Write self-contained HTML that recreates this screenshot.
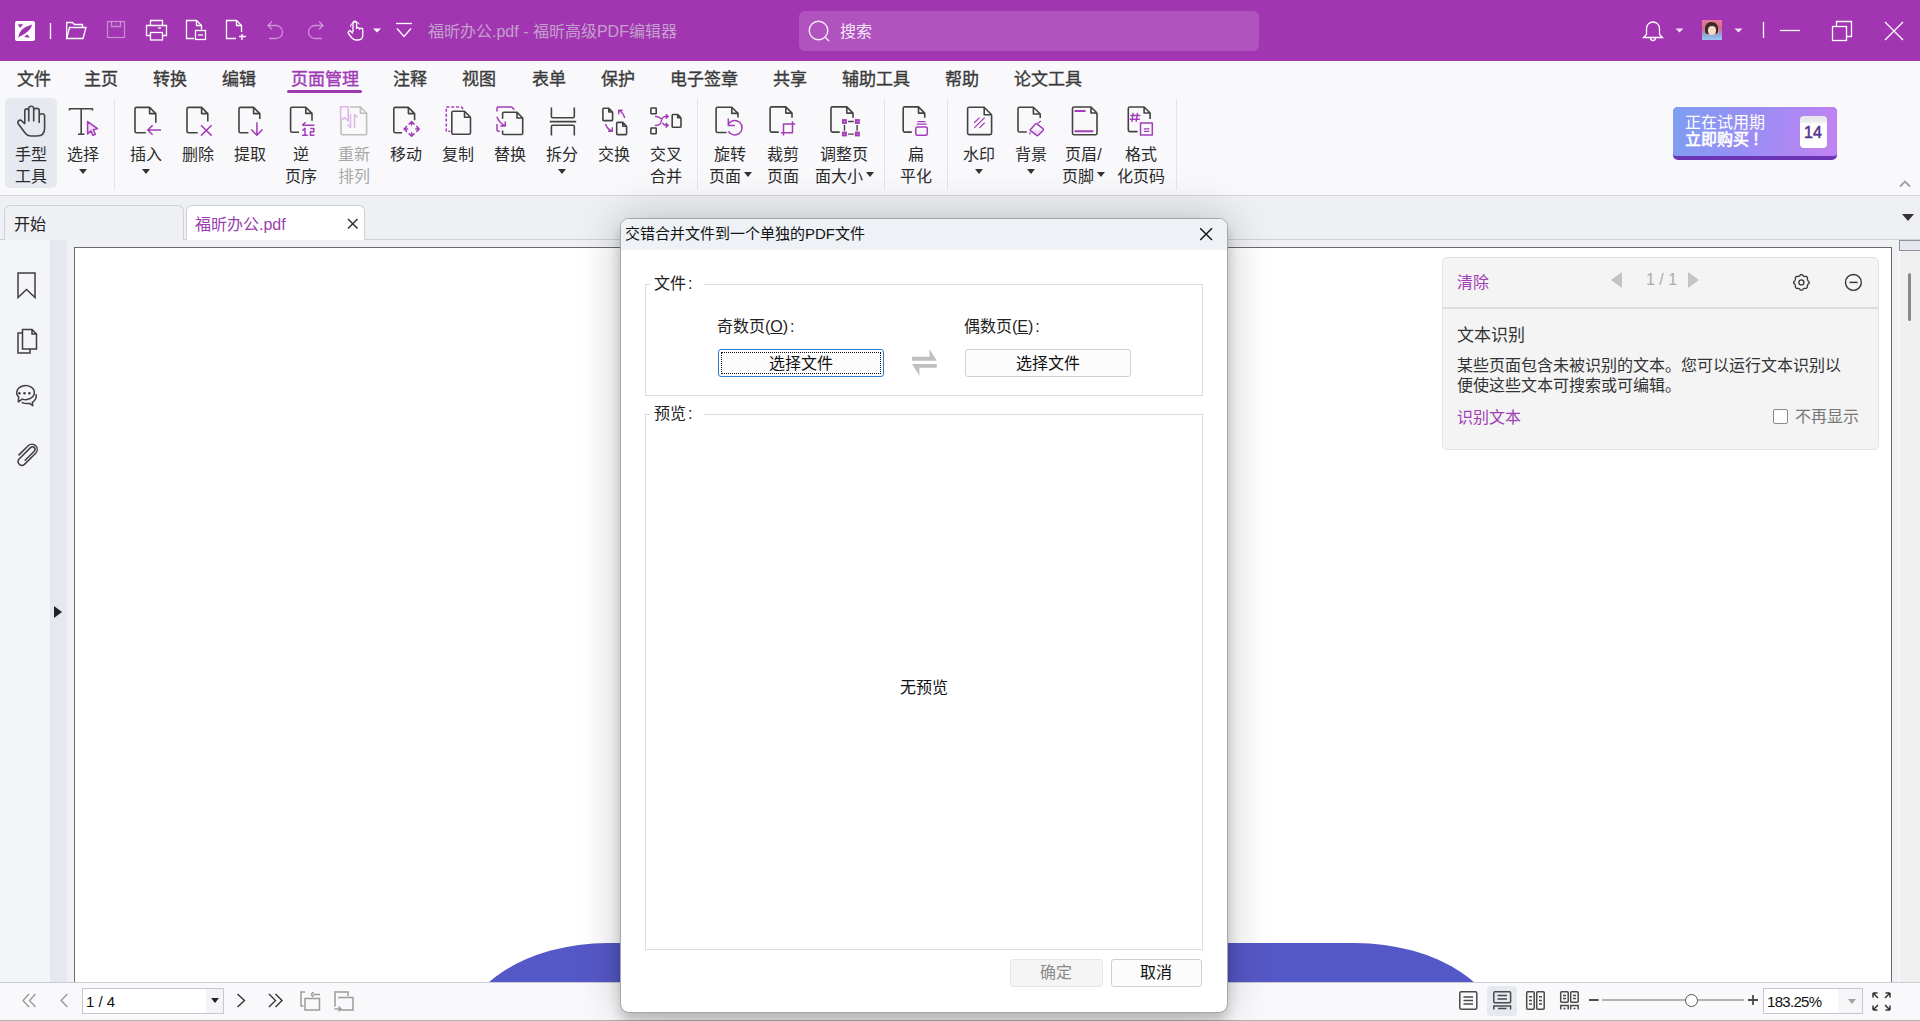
<!DOCTYPE html>
<html lang="zh-CN">
<head>
<meta charset="utf-8">
<title>福昕办公.pdf - 福昕高级PDF编辑器</title>
<style>
*{box-sizing:border-box;margin:0;padding:0}
html,body{width:1920px;height:1021px;overflow:hidden}
body{position:relative;background:#F9F9FC;font-family:"Liberation Sans",sans-serif;color:#333;font-size:16px}
.a{position:absolute}
.t{position:absolute;white-space:nowrap;line-height:1}
#titlebar{left:0;top:0;width:1920px;height:61px;background:#A236B2}
#search{left:799px;top:11px;width:460px;height:40px;border-radius:6px;background:#B053BF}
#menubar .t{top:71px;font-size:17px;color:#3A3A3A;-webkit-text-stroke:0.35px #3A3A3A}
#ribbon{left:0;top:61px;width:1920px;height:134px;background:#F9F9FC}
.rl{position:absolute;font-size:16px;line-height:22px;color:#2B2B2B;text-align:center;white-space:nowrap}
.dis{color:#A8A8A8}
.sep{position:absolute;top:99px;width:1px;height:91px;background:#E2E4EA}
.tri{position:absolute;width:0;height:0;border-left:4px solid transparent;border-right:4px solid transparent;border-top:5px solid #333}
.itri{display:inline-block;vertical-align:top;margin-top:6px;margin-left:3px;width:0;height:0;border-left:4px solid transparent;border-right:4px solid transparent;border-top:5px solid #333}
</style>
</head>
<body>
<div id="titlebar" class="a"></div>
<div id="search" class="a"></div>
<svg class="a" style="left:0;top:0" width="1920" height="61" viewBox="0 0 1920 61" fill="none" stroke="#fff" stroke-width="1.3">
 <!-- logo -->
 <rect x="15" y="21" width="20" height="20" rx="2" fill="#fff" stroke="none"/>
 <path d="M18.2 37.4 Q19.2 28.2 32 24.6 Q31 30 25.5 33.3 Q22.5 35.3 18.2 37.4 Z" fill="#A035B1" stroke="none"/>
 <path d="M17.8 24.2 H23.4 L19.9 27.9 Z M24.1 36.9 L27.3 34.2 L29.9 37.8 Z" fill="#A035B1" stroke="none"/>
 <line x1="50.5" y1="23" x2="50.5" y2="39"/>
 <!-- folder -->
 <path d="M66.7 38.5 V22.5 H72.5 L74.5 24.5 H82.5 V27.5"/>
 <path d="M66.7 38.5 L69.5 27.5 H86 L83 38.5 Z"/>
 <!-- save (dim) -->
 <g stroke="rgba(255,255,255,0.42)">
  <rect x="107.5" y="21.5" width="17" height="16"/>
  <path d="M111.5 21.5 V26.5 H120.5 V21.5"/>
  <line x1="115.5" y1="24" x2="116.5" y2="24"/>
 </g>
 <!-- printer -->
 <path d="M150.5 25.5 V20.5 H162.5 V25.5"/>
 <path d="M150.5 35.5 H146.5 V25.5 H166.5 V35.5 H162.5"/>
 <rect x="150.5" y="32.5" width="12" height="7.5"/>
 <line x1="158" y1="28" x2="161" y2="28"/>
 <!-- page w/ box -->
 <path d="M194 38.5 H186.5 V20.5 H196.5 L201.5 25.5 V29.5"/>
 <path d="M196.5 20.5 V25.5 H201.5"/>
 <rect x="195.5" y="30.5" width="10" height="9"/>
 <line x1="198" y1="35" x2="203" y2="35"/>
 <!-- new page + -->
 <path d="M236 38.5 H226.5 V20.5 H236.5 L241.5 25.5 V32"/>
 <path d="M236.5 20.5 V25.5 H241.5"/>
 <path d="M242 34 V40 M239 36.5 H246"/>
 <!-- undo / redo dim -->
 <g stroke="rgba(255,255,255,0.45)">
  <path d="M268.5 25.5 H276 A6.5 6.5 0 0 1 276 38.5 H269"/>
  <path d="M272 21.5 L268 25.5 L272 29.5"/>
  <path d="M322.5 25.5 H315 A6.5 6.5 0 0 0 315 38.5 H322"/>
  <path d="M319 21.5 L323 25.5 L319 29.5"/>
 </g>
 <!-- touch hand -->
 <path d="M353 32 V23 A1.8 1.8 0 0 1 356.6 23 V29 M356.6 28.5 A1.6 1.6 0 0 1 359.6 28.8 V30 M359.6 29.5 A1.6 1.6 0 0 1 362.8 30 V35 Q362.8 40 358 40 H356 Q353.5 40 351.5 37.5 L348.5 33.5 A1.5 1.5 0 0 1 351 31.5 L353 33.5"/>
 <path d="M350.5 27 A5 5 0 0 1 359.5 24" stroke-width="1"/>
 <path d="M373 28.5 H381 L377 32.5 Z" fill="#fff" stroke="none"/>
 <!-- quick access chevron -->
 <line x1="396" y1="23.5" x2="412" y2="23.5"/>
 <path d="M397 28.5 L404 36.5 L411 28.5"/>
 <!-- right side -->
 <path d="M1653 22 A6.5 6.5 0 0 1 1659.5 28.5 V34.5 L1662.5 37.5 H1643.5 L1646.5 34.5 V28.5 A6.5 6.5 0 0 1 1653 22 Z"/>
 <path d="M1650.5 38 A2.5 2.5 0 0 0 1655.5 38"/>
 <path d="M1675.5 28.5 H1683.5 L1679.5 32.5 Z" fill="#fff" stroke="none" opacity="0.85"/>
 <path d="M1734.5 28.5 H1742.5 L1738.5 32.5 Z" fill="#fff" stroke="none" opacity="0.85"/>
 <line x1="1763.5" y1="22" x2="1763.5" y2="38"/>
 <line x1="1780" y1="30.5" x2="1800" y2="30.5"/>
 <rect x="1832.5" y="26.5" width="14" height="14"/>
 <path d="M1836.5 26.5 V21.5 H1851.5 V36.5 H1846.5"/>
 <path d="M1885 22 L1903 40 M1903 22 L1885 40"/>
</svg>
<!-- avatar -->
<div class="a" style="left:1702px;top:20px;width:20px;height:20px;background:linear-gradient(180deg,#e87a9a 0%,#d86888 40%,#8bb8e8 85%,#a0c8f0 100%);overflow:hidden">
 <div class="a" style="left:3px;top:2px;width:13px;height:12px;border-radius:6px 6px 3px 3px;background:#3a2a2a"></div>
 <div class="a" style="left:6px;top:6px;width:8px;height:9px;border-radius:4px;background:#f4d8c8"></div>
</div>
<div class="t" style="left:428px;top:24px;font-size:16px;color:#C3A0CB">福昕办公.pdf - 福昕高级PDF编辑器</div>
<div class="t" style="left:840px;top:24px;font-size:16px;color:#F4E6F6">搜索</div>
<svg class="a" style="left:0;top:0" width="1920" height="61" fill="none" stroke="#F6E8F8" stroke-width="1.4">
 <circle cx="818.5" cy="30.5" r="9.3"/>
 <line x1="825" y1="37" x2="829" y2="41"/>
</svg>
<svg class="a" style="left:0;top:0" width="1200" height="196" viewBox="0 0 1200 196" fill="none" stroke-linecap="butt" stroke-linejoin="round"><defs><linearGradient id="bgf" x1="0" y1="0" x2="0" y2="1"><stop offset="0.5" stop-color="#fff" stop-opacity="0"/><stop offset="0.5" stop-color="#F0DDF4"/></linearGradient></defs>
<rect x="5" y="98" width="52" height="90" rx="5" fill="#E6E9F0" stroke="none"/>
<g stroke="#434343" stroke-width="1.6">
<path d="M24.8 124 V111 Q24.8 108.9 26.8 108.9 Q28.75 108.9 28.75 111 V121.6 M28.75 111 V108.4 Q28.75 106.3 31.2 106.3 Q33.7 106.3 33.7 108.4 V121.6 M33.7 110.5 Q33.7 108.4 36.45 108.4 Q39.2 108.4 39.2 110.6 V122.9 M39.2 116 Q39.2 113.8 41.9 113.8 Q44.6 113.8 44.6 116 V128.5 Q44.6 136 37 136 H30.5 Q27.3 136 25.3 133.3 L18.4 124 Q17.1 122 18.7 120.6 Q20.4 119.4 22.2 121.2 L24.8 124"/>
<path d="M69.5 110.5 V108.8 H92.5 V110.5 M81.2 108.8 V134.3 M78 134.3 H84.5"/>
<path d="M155.8 122.7 V113.60000000000001 L149.60000000000002 107.4 H136.5 Q135 107.4 135 108.9 V131.3 Q135 132.8 136.5 132.8 H145.7 M149.60000000000002 107.4 V113.60000000000001 H155.8"/>
<path d="M207.8 121.5 V113.60000000000001 L201.60000000000002 107.4 H188.5 Q187 107.4 187 108.9 V131.3 Q187 132.8 188.5 132.8 H197.7 M201.60000000000002 107.4 V113.60000000000001 H207.8"/>
<path d="M259.8 119 V113.60000000000001 L253.60000000000002 107.4 H240.5 Q239 107.4 239 108.9 V131.3 Q239 132.8 240.5 132.8 H248.4 M253.60000000000002 107.4 V113.60000000000001 H259.8"/>
<path d="M312 120.7 V113.4 L305.8 107.2 H292.1 Q290.6 107.2 290.6 108.7 V130.7 Q290.6 132.2 292.1 132.2 H299 M305.8 107.2 V113.4 H312"/>
<path d="M414.6 120.3 V113.60000000000001 L408.40000000000003 107.4 H395.3 Q393.8 107.4 393.8 108.9 V131.3 Q393.8 132.8 395.3 132.8 H402 M408.40000000000003 107.4 V113.60000000000001 H414.6"/>
<path d="M470.5 117.2 V132.8 Q470.5 134.3 469.0 134.3 H453.3 Q451.8 134.3 451.8 132.8 V112.7 Q451.8 111.2 453.3 111.2 H464.5 L470.5 117.2 M464.5 111.2 V117.2 H470.5"/>
<path d="M502.6 118.7 V113.6 Q502.6 112.3 503.9 112.3 H517 L522.7 118 V133.2 Q522.7 134.5 521.4 134.5 H503.9 Q502.6 134.5 502.6 133.2 V130.4 M517 112.3 V118 H522.7"/>
<path d="M551.4 107.4 V116.5 Q551.4 117.8 552.7 117.8 H573 Q574.3 117.8 574.3 116.5 V107.4 M549.7 121.6 H576.2 M551.4 135.5 V126.5 Q551.4 125.2 552.7 125.2 H573 Q574.3 125.2 574.3 126.5 V135.5"/>
<path d="M612.6 112.0 V119.8 Q612.6 120.6 611.8000000000001 120.6 H603.6999999999999 Q602.9 120.6 602.9 119.8 V109.0 Q602.9 108.2 603.6999999999999 108.2 H608.8000000000001 L612.6 112.0 M608.8000000000001 108.2 V112.0 H612.6"/>
<path d="M626.6 126.2 V133.79999999999998 Q626.6 134.6 625.8000000000001 134.6 H617.5 Q616.7 134.6 616.7 133.79999999999998 V123.2 Q616.7 122.4 617.5 122.4 H622.8000000000001 L626.6 126.2 M622.8000000000001 122.4 V126.2 H626.6"/>
<rect x="650.9" y="108" width="5.3" height="5.8" rx="0.5"/><rect x="650.9" y="128" width="5.3" height="5.8" rx="0.5"/>
<path d="M681 117.8 V126.5 Q681 127.3 680.2 127.3 H673.0 Q672.2 127.3 672.2 126.5 V115.3 Q672.2 114.5 673.0 114.5 H677.7 L681 117.8 M677.7 114.5 V117.8 H681"/>
<path d="M738 117.5 V113.4 L731.8 107.2 H717.6 Q716.1 107.2 716.1 108.7 V131.0 Q716.1 132.5 717.6 132.5 H726.5 M731.8 107.2 V113.4 H738"/>
<path d="M792 117.8 V113.10000000000001 L785.8 106.9 H771.6 Q770.1 106.9 770.1 108.4 V130.6 Q770.1 132.1 771.6 132.1 H778.7 M785.8 106.9 V113.10000000000001 H792"/>
<path d="M853 117.8 V113.10000000000001 L846.8 106.9 H832.5 Q831 106.9 831 108.4 V130.6 Q831 132.1 832.5 132.1 H839.7 M846.8 106.9 V113.10000000000001 H853"/>
<path d="M848.1 121.5 H853.8 M848.1 134.1 H853.8 M844.5 125 V130.7 M857.1 125 V130.7" stroke-width="1.4"/>
<path d="M924.7 117.8 V113.10000000000001 L918.5 106.9 H904.7 Q903.2 106.9 903.2 108.4 V130.6 Q903.2 132.1 904.7 132.1 H911.8 M918.5 106.9 V113.10000000000001 H924.7"/>
<path d="M991.6 114.7 V133.1 Q991.6 134.6 990.1 134.6 H969.1 Q967.6 134.6 967.6 133.1 V108.8 Q967.6 107.3 969.1 107.3 H984.2 L991.6 114.7 M984.2 107.3 V114.7 H991.6"/>
<path d="M1040.2 118 V114.0 L1033.4 107.2 H1019.5 Q1018 107.2 1018 108.7 V130.5 Q1018 132 1019.5 132 H1026.8 M1033.4 107.2 V114.0 H1040.2"/>
<path d="M1097 113 V133.3 Q1097 134.8 1095.5 134.8 H1074.0 Q1072.5 134.8 1072.5 133.3 V108.5 Q1072.5 107 1074.0 107 H1091 L1097 113 M1091 107 V113 H1097"/>
<path d="M1150.1 119 V113 L1144.1 107 H1129.8 Q1128.3 107 1128.3 108.5 V130.1 Q1128.3 131.6 1129.8 131.6 H1137.6 M1144.1 107 V113 H1150.1"/>
</g>
<g stroke="#BDBDBD" stroke-width="1.6">
<path d="M341 121 V133.5 Q341 134.8 342.3 134.8 H365.3 Q366.6 134.8 366.6 133.5 V113.2 L360.4 107 H350"/>
<path d="M360.4 107 V113.2 H366.6" />
</g>
<g stroke="#DDB8E6" stroke-width="1.6"><path d="M340.6 106.8 V120.8 L344.4 117.6 L348.2 120.8 V106.8 Z"/><path d="M350.5 114 V127.5 L347.5 124.5 M354.5 128 V114.5 L357.5 117.5"/></g>
<g stroke="#A23CB8" stroke-width="1.5">
<path d="M87.6 121.6 L97.6 128.6 L93.3 129.8 L95.3 134.2 L93 135.3 L90.8 130.9 L87.6 134 Z" fill="#F0DDF4"/>
<path d="M148 130 H161 M152.6 125.4 L147.8 130 L152.6 134.8"/>
<path d="M201 125.3 L211.6 135.6 M211.6 125.3 L201 135.6"/>
<path d="M256.9 122.3 V135 M251.3 129.5 L256.9 135.3 L262.5 129.5"/>
<path d="M302.3 125.2 H314.4 M305.6 122.2 L302.3 125.2"/>
<path d="M302.4 130.6 L305 128.2 V135.5 M302 135.2 H307.8 M310.2 128.4 H313.8 V131.7 H310.4 V135.2 H314.4"/>
<path d="M411.6 121.8 V125.5 M408.7 124.5 L411.6 121.6 L414.5 124.5 M411.6 136.2 V132.3 M408.7 133.4 L411.6 136.3 L414.5 133.4 M404.2 129 H408.2 M407 126.1 L404.1 129 L407 131.9 M419.2 129 H415.2 M416.3 126.1 L419.2 129 L416.3 131.9"/>
<path d="M450.3 131.3 H446.3 V106.9 H461.1 L464 109.8" stroke-dasharray="3 1.9" stroke-dashoffset="1"/>
<path d="M499.7 131.2 H498.2 Q497 131.2 497 130 V124 M497 111.4 V108.2 Q497 107 498.2 107 H511.6 L514.4 109.6"/>
<path d="M496.9 116.7 Q499 122.5 505 126 M505.3 121.5 V126 H500.3"/>
<path d="M624.7 118 Q623.5 113 618.9 110.4 M618.7 114.3 V110.2 H622.7" stroke-width="1.4"/>
<path d="M605.5 124 Q607 129 612.1 131.2 M612.3 127.3 V131.3 H608" stroke-width="1.4"/>
<path d="M655 116.5 Q659 116.3 661.2 118.8 M655 125.4 Q660.8 125.8 661.3 121 Q662 116.4 666.5 116.4 M662.3 123 Q664 125.3 666.5 125.3" stroke-width="1.4"/><path d="M666 114 L668.8 116.4 L666 118.8 Z M666 122.9 L668.8 125.3 L666 127.7 Z" fill="#A23CB8" stroke-width="0.8"/>
<path d="M728.6 123.8 A7.3 7.3 0 1 1 728.4 131.3"/><path d="M728.3 118.6 V125.4 H734.8"/>
<path d="M783.5 135.6 V124.1 H795.2 M780.9 132.7 H792.5 V121.2"/>
</g>
<g fill="#A23CB8" stroke="none"><rect x="842" y="119.1" width="4.9" height="4.8"/><rect x="854.9" y="119.1" width="4.9" height="4.8"/><rect x="842" y="131.6" width="4.9" height="4.8"/><rect x="854.9" y="131.6" width="4.9" height="4.8"/></g><g fill="#E8B8F0"><rect x="844" y="121" width="1" height="1"/><rect x="856.9" y="121" width="1" height="1"/><rect x="844" y="133.5" width="1" height="1"/><rect x="856.9" y="133.5" width="1" height="1"/></g>
<g stroke="#A23CB8" stroke-width="1.5">
<rect x="915.8" y="126.9" width="11.5" height="8.3" rx="1.5"/><path d="M917.5 121.7 H925.6 M916.6 124.2 H926.8" stroke-width="1.2"/>
<path d="M974.3 122.8 L979.5 117.6 M974.3 127.9 L984.6 117.6 M979.5 127.9 L984.6 122.8" stroke-width="1.25"/>
<path d="M1030.5 129.6 L1035.2 124.3 Q1036.2 123.2 1037.2 124.1 L1042.9 128.6 Q1043.9 129.4 1043 130.4 L1038.5 135.1 Q1037.5 136.1 1036.5 135.2 L1030.7 130.9 Q1029.8 130.2 1030.5 129.6 Z" fill="url(#bgf)"/><path d="M1037.6 123.4 L1040.8 121" stroke-width="1.3"/><circle cx="1029.9" cy="133.3" r="0.9" fill="#A23CB8" stroke="none"/>
<path d="M1074.5 111 H1085.5 M1074.5 131.2 H1093.3" stroke-width="2"/>
<path d="M1133.2 112.8 L1131.8 121.8 M1137.5 112.8 L1136.1 121.8 M1130.3 115.5 H1140.4 M1129.8 119.2 H1139.8" stroke-width="1.4"/>
<rect x="1140.5" y="123.1" width="11.8" height="11.8" fill="#F9F9FC"/><path d="M1144 128.8 H1149.3 M1144 131.3 H1149.3" stroke-width="1.2"/>
</g>
</svg>
<div id="menubar">
<div class="t" style="left:17px">文件</div>
<div class="t" style="left:84px">主页</div>
<div class="t" style="left:153px">转换</div>
<div class="t" style="left:222px">编辑</div>
<div class="t" style="left:291px;color:#A038B4;-webkit-text-stroke-color:#A038B4">页面管理</div>
<div class="t" style="left:393px">注释</div>
<div class="t" style="left:462px">视图</div>
<div class="t" style="left:532px">表单</div>
<div class="t" style="left:601px">保护</div>
<div class="t" style="left:670px">电子签章</div>
<div class="t" style="left:773px">共享</div>
<div class="t" style="left:842px">辅助工具</div>
<div class="t" style="left:945px">帮助</div>
<div class="t" style="left:1014px">论文工具</div>
</div>
<div class="a" style="left:287px;top:90px;width:75px;height:3px;border-radius:2px;background:#A038B4"></div>
<div class="rl" style="left:-19px;top:144px;width:100px">手型<br>工具</div>
<div class="rl" style="left:33px;top:144px;width:100px">选择</div>
<div class="tri" style="left:79px;top:169px"></div>
<div class="rl" style="left:96px;top:144px;width:100px">插入</div>
<div class="tri" style="left:142px;top:169px"></div>
<div class="rl" style="left:147.5px;top:144px;width:100px">删除</div>
<div class="rl" style="left:199.5px;top:144px;width:100px">提取</div>
<div class="rl" style="left:251px;top:144px;width:100px">逆<br>页序</div>
<div class="rl dis" style="left:303.5px;top:144px;width:100px">重新<br>排列</div>
<div class="rl" style="left:356px;top:144px;width:100px">移动</div>
<div class="rl" style="left:407.7px;top:144px;width:100px">复制</div>
<div class="rl" style="left:460px;top:144px;width:100px">替换</div>
<div class="rl" style="left:512px;top:144px;width:100px">拆分</div>
<div class="tri" style="left:558px;top:169px"></div>
<div class="rl" style="left:564px;top:144px;width:100px">交换</div>
<div class="rl" style="left:616px;top:144px;width:100px">交叉<br>合并</div>
<div class="rl" style="left:680px;top:144px;width:100px">旋转<br>页面<span class="itri"></span></div>
<div class="rl" style="left:732.5px;top:144px;width:100px">裁剪<br>页面</div>
<div class="rl" style="left:794px;top:144px;width:100px">调整页<br>面大小<span class="itri"></span></div>
<div class="rl" style="left:866px;top:144px;width:100px">扁<br>平化</div>
<div class="rl" style="left:928.5px;top:144px;width:100px">水印</div>
<div class="tri" style="left:974.5px;top:169px"></div>
<div class="rl" style="left:981px;top:144px;width:100px">背景</div>
<div class="tri" style="left:1027px;top:169px"></div>
<div class="rl" style="left:1033.5px;top:144px;width:100px">页眉/<br>页脚<span class="itri"></span></div>
<div class="rl" style="left:1091px;top:144px;width:100px">格式<br>化页码</div>
<div class="sep" style="left:114px"></div>
<div class="sep" style="left:697px"></div>
<div class="sep" style="left:884px"></div>
<div class="sep" style="left:947px"></div>
<div class="sep" style="left:1176px"></div>
<!-- ribbon bottom line & tab bar -->
<div class="a" style="left:0;top:195px;width:1920px;height:1px;background:#D3D6DD"></div>
<div class="a" style="left:0;top:196px;width:1920px;height:44px;background:#EEF0F4"></div>
<div class="a" style="left:0;top:239px;width:1920px;height:1px;background:#CDD1D9"></div>
<div class="a" style="left:4px;top:205px;width:180px;height:35px;background:#EEF0F4;border:1px solid #CDD1D9;border-bottom:none;border-radius:6px 6px 0 0"></div>
<div class="t" style="left:14px;top:217px;font-size:16px;color:#222">开始</div>
<div class="a" style="left:186px;top:205px;width:179px;height:35px;background:#fff;border:1px solid #CDD1D9;border-bottom:none;border-radius:6px 6px 0 0"></div>
<div class="t" style="left:195px;top:217px;font-size:16px;color:#9A3DB0">福昕办公.pdf</div>
<svg class="a" style="left:340px;top:212px" width="24" height="24" fill="none" stroke="#333" stroke-width="1.5"><path d="M8 7 L17.5 16.5 M17.5 7 L8 16.5"/></svg>
<!-- tab bar dropdown + ribbon collapse -->
<div class="a" style="left:1902px;top:214px;width:0;height:0;border-left:6px solid transparent;border-right:6px solid transparent;border-top:7px solid #333"></div>
<svg class="a" style="left:1896px;top:176px" width="18" height="14" fill="none" stroke="#A0A0A0" stroke-width="1.8"><path d="M4 10.5 L9 5.5 L14 10.5"/></svg>
<!-- left panel -->
<div class="a" style="left:0;top:240px;width:50px;height:742px;background:#F4F5F9"></div>
<div class="a" style="left:50px;top:240px;width:17px;height:742px;background:#E6E8F1"></div>
<div class="a" style="left:67px;top:240px;width:1833px;height:742px;background:#F0F1F5"></div>
<svg class="a" style="left:0;top:240px" width="50" height="240" fill="none" stroke="#3E3E3E" stroke-width="1.5">
 <path d="M18 33 V57.5 L26.5 49.5 L35 57.5 V33 Z"/>
 <path d="M22.5 93 H18 V113 H30 V109"/>
 <path d="M22.5 109 V89.5 H32 L36.5 94 V109 Z M32 89.5 V94 H36.5"/>
 <path d="M18.7 157 A8.8 7 0 1 1 22.3 159.1 L18.3 161.9 Z" stroke-linejoin="round"/>
 <path d="M36.1 154.1 Q36.9 159.5 32.3 162.5 L32.8 165.7 L29.4 163.4 Q25 164 21.7 162.3" stroke-linejoin="round"/>
 <circle cx="19.4" cy="153.2" r="1.25" fill="#3E3E3E" stroke="none"/><circle cx="24.5" cy="153.2" r="1.25" fill="#3E3E3E" stroke="none"/><circle cx="29.4" cy="153.2" r="1.25" fill="#3E3E3E" stroke="none"/>
 <path d="M18.53 215.4 L28.43 205.5 A5.3 5.3 0 0 1 35.92 212.97 L24.47 224.4 A3.8 3.8 0 0 1 19.09 219.06 L30.55 207.6 A2.6 2.6 0 0 1 34.22 211.3 L24.68 220.8"/>
</svg>
<div class="a" style="left:54px;top:606px;width:0;height:0;border-top:6.5px solid transparent;border-bottom:6.5px solid transparent;border-left:8px solid #222"></div>
<!-- page area -->
<div class="a" style="left:74px;top:247px;width:1818px;height:736px;background:#fff;border:1px solid #6A6A6A;border-bottom:none"></div>
<div class="a" style="left:1899px;top:240px;width:21px;height:742px;background:#EFEFF0;border-left:1px solid #FAFAFA"></div>
<div class="a" style="left:1899px;top:240px;width:22px;height:11px;background:#E6E8F0;border:1.5px solid #8E929C"></div>
<div class="a" style="left:1908px;top:273px;width:3px;height:48px;border-radius:2px;background:#8A8A8A"></div>
<!-- blue shape at page bottom -->
<div class="a" style="left:75px;top:900px;width:1816px;height:82px;overflow:hidden">
 <div class="a" style="left:383px;top:43px;width:1047px;height:260px;border-radius:150px/100px;background:#5558C7"></div>
</div>
<!-- status bar -->
<div class="a" style="left:0;top:982px;width:1920px;height:39px;background:#F9F9FC;border-top:1px solid #C9CCD4"></div>
<div class="a" style="left:0;top:1020px;width:1920px;height:1px;background:#B2B2B2"></div>
<svg class="a" style="left:0;top:982px" width="380" height="39" fill="none" stroke-width="1.4">
 <path d="M29 12 L23 18.5 L29 25 M35.5 12 L29.5 18.5 L35.5 25" stroke="#9A9A9A"/>
 <path d="M67.5 12 L61 18.5 L67.5 25" stroke="#9A9A9A"/>
 <path d="M237.5 12 L244.5 18.5 L237.5 25" stroke="#333"/>
 <path d="M269 12 L275.5 18.5 L269 25 M275.5 12 L282 18.5 L275.5 25" stroke="#333"/>
 <g stroke="#9C9C9C" stroke-width="1.5">
  <path d="M305 10 H301 V24 H303.5"/>
  <rect x="305" y="16.5" width="14.5" height="11.5"/>
  <path d="M313 12.5 H320 M311 12.5 L313.5 10 M311 12.5 L313.5 15" />
  <path d="M335 24.5 V10 H348 V14"/>
  <path d="M339 16.5 V15.5 H353 V28 H341"/>
  <path d="M334.5 27 H341 M338.5 24.5 L341 27 L338.5 29.5"/>
 </g>
</svg>
<div class="a" style="left:82px;top:988px;width:142px;height:26px;background:#fff;border:1px solid #C3C7CF"></div>
<div class="a" style="left:206px;top:989px;width:17px;height:24px;background:#F4F4F6"></div>
<div class="t" style="left:86px;top:994px;font-size:15px;color:#111">1 / 4</div>
<div class="a" style="left:211px;top:998px;width:0;height:0;border-left:4.5px solid transparent;border-right:4.5px solid transparent;border-top:5px solid #222"></div>
<div class="a" style="left:1487px;top:986px;width:30px;height:30px;border-radius:4px;background:#E6E9F0"></div>
<svg class="a" style="left:1440px;top:982px" width="480" height="39" fill="none" stroke="#4A4A4A" stroke-width="1.5">
 <rect x="19.8" y="9.8" width="17" height="17.5" rx="1.5"/>
 <path d="M23.5 15 H33 M23.5 18.5 H33 M23.5 22 H33"/>
 <rect x="53.8" y="9.8" width="16.8" height="11" rx="1"/>
 <path d="M57.5 13.5 H67 M57.5 17 H67"/>
 <path d="M53.8 27.5 V24 H70.6 V27.5 M58 26.5 H66.5"/>
 <rect x="86.7" y="9.8" width="7.5" height="17.5" rx="1"/>
 <rect x="96.7" y="9.8" width="7.5" height="17.5" rx="1"/>
 <path d="M89 14.8 H92 M89 18.5 H92 M89 22 H92 M99 14.8 H102 M99 18.5 H102 M99 22 H102"/>
 <rect x="120.7" y="9.8" width="7.5" height="10.5" rx="1"/>
 <rect x="130.7" y="9.8" width="7.5" height="10.5" rx="1"/>
 <path d="M123 13.5 H126 M123 16.5 H126 M133 13.5 H136 M133 16.5 H136"/>
 <path d="M120.7 27.5 V23.5 H128.2 V27.5 M130.7 27.5 V23.5 H138.2 V27.5 M123.5 26.5 H125.5 M133.5 26.5 H135.5"/>
 <path d="M149 18 H158.5" stroke-width="2"/>
 <path d="M162 18 H304" stroke="#B4B4B4" stroke-width="2"/>
 <path d="M308 18 H318 M313 13 V23" stroke-width="1.8"/>
</svg>
<div class="a" style="left:1684.5px;top:993.5px;width:13px;height:13px;border-radius:50%;background:#fff;border:1.3px solid #555"></div>
<div class="a" style="left:1763px;top:988px;width:100px;height:26px;background:#fff;border:1px solid #C3C7CF"></div>
<div class="a" style="left:1838px;top:989px;width:24px;height:24px;background:#F6F6F8"></div>
<div class="t" style="left:1767px;top:994px;font-size:15px;letter-spacing:-0.7px;color:#111">183.25%</div>
<div class="a" style="left:1848px;top:999px;width:0;height:0;border-left:4px solid transparent;border-right:4px solid transparent;border-top:5px solid #A0A0A0"></div>
<svg class="a" style="left:1870px;top:990px" width="24" height="24" fill="none" stroke="#333" stroke-width="1.5">
 <path d="M3 3 L8 8 M3 3 V7.5 M3 3 H7.5"/>
 <path d="M20 3 L15 8 M20 3 V7.5 M20 3 H15.5"/>
 <path d="M3 20 L8 15 M3 20 V15.5 M3 20 H7.5"/>
 <path d="M20 20 L15 15 M20 20 V15.5 M20 20 H15.5"/>
</svg>
<!-- OCR card -->
<div class="a" style="left:1442px;top:257px;width:437px;height:193px;background:#F4F4F4;border:1px solid #E2E2E2;border-radius:5px"></div>
<div class="a" style="left:1443px;top:307px;width:435px;height:1.5px;background:#DCDCDC"></div>
<div class="t" style="left:1457px;top:275px;font-size:16px;color:#A03CB4">清除</div>
<div class="a" style="left:1611px;top:272px;width:0;height:0;border-top:8px solid transparent;border-bottom:8px solid transparent;border-right:11px solid #C4C4C4"></div>
<div class="t" style="left:1646px;top:272px;font-size:16px;color:#ABABAB">1 / 1</div>
<div class="a" style="left:1688px;top:272px;width:0;height:0;border-top:8px solid transparent;border-bottom:8px solid transparent;border-left:11px solid #C4C4C4"></div>
<svg class="a" style="left:1790px;top:272px" width="74" height="22" fill="none" stroke="#333" stroke-width="1.5">
 <path d="M17.59 12.96 L17.49 13.21 L17.38 13.45 L17.28 13.70 L17.26 13.99 L17.39 14.40 L17.49 14.83 L17.41 15.14 L17.25 15.39 L17.05 15.63 L16.84 15.84 L16.63 16.05 L16.39 16.25 L16.14 16.41 L15.83 16.49 L15.40 16.39 L14.99 16.26 L14.70 16.28 L14.45 16.38 L14.21 16.49 L13.96 16.59 L13.72 16.69 L13.47 16.78 L13.23 16.89 L13.00 17.08 L12.80 17.46 L12.58 17.84 L12.30 18.00 L12.00 18.07 L11.70 18.09 L11.40 18.10 L11.10 18.09 L10.80 18.07 L10.50 18.00 L10.22 17.84 L10.00 17.46 L9.80 17.08 L9.57 16.89 L9.33 16.78 L9.08 16.69 L8.84 16.59 L8.59 16.49 L8.35 16.38 L8.10 16.28 L7.81 16.26 L7.40 16.39 L6.97 16.49 L6.66 16.41 L6.41 16.25 L6.17 16.05 L5.96 15.84 L5.75 15.63 L5.55 15.39 L5.39 15.14 L5.31 14.83 L5.41 14.40 L5.54 13.99 L5.52 13.70 L5.42 13.45 L5.31 13.21 L5.21 12.96 L5.11 12.72 L5.02 12.47 L4.91 12.23 L4.72 12.00 L4.34 11.80 L3.96 11.58 L3.80 11.30 L3.73 11.00 L3.71 10.70 L3.70 10.40 L3.71 10.10 L3.73 9.80 L3.80 9.50 L3.96 9.22 L4.34 9.00 L4.72 8.80 L4.91 8.57 L5.02 8.33 L5.11 8.08 L5.21 7.84 L5.31 7.59 L5.42 7.35 L5.52 7.10 L5.54 6.81 L5.41 6.40 L5.31 5.97 L5.39 5.66 L5.55 5.41 L5.75 5.17 L5.96 4.96 L6.17 4.75 L6.41 4.55 L6.66 4.39 L6.97 4.31 L7.40 4.41 L7.81 4.54 L8.10 4.52 L8.35 4.42 L8.59 4.31 L8.84 4.21 L9.08 4.11 L9.33 4.02 L9.57 3.91 L9.80 3.72 L10.00 3.34 L10.22 2.96 L10.50 2.80 L10.80 2.73 L11.10 2.71 L11.40 2.70 L11.70 2.71 L12.00 2.73 L12.30 2.80 L12.58 2.96 L12.80 3.34 L13.00 3.72 L13.23 3.91 L13.47 4.02 L13.72 4.11 L13.96 4.21 L14.21 4.31 L14.45 4.42 L14.70 4.52 L14.99 4.54 L15.40 4.41 L15.83 4.31 L16.14 4.39 L16.39 4.55 L16.63 4.75 L16.84 4.96 L17.05 5.17 L17.25 5.41 L17.41 5.66 L17.49 5.97 L17.39 6.40 L17.26 6.81 L17.28 7.10 L17.38 7.35 L17.49 7.59 L17.59 7.84 L17.69 8.08 L17.78 8.33 L17.89 8.57 L18.08 8.80 L18.46 9.00 L18.84 9.22 L19.00 9.50 L19.07 9.80 L19.09 10.10 L19.10 10.40 L19.09 10.70 L19.07 11.00 L19.00 11.30 L18.84 11.58 L18.46 11.80 L18.08 12.00 L17.89 12.23 L17.78 12.47 L17.69 12.72 L17.59 12.96 Z" stroke-width="1.3" stroke-linejoin="round"/>
 <circle cx="11.4" cy="10.4" r="2.5" stroke-width="1.3"/>
 <circle cx="63.4" cy="10.4" r="7.9" stroke-width="1.35"/>
 <path d="M59.4 10.4 H67.6" stroke-width="1.4"/>
</svg>
<div class="t" style="left:1457px;top:327px;font-size:17px;color:#333">文本识别</div>
<div class="a" style="left:1457px;top:356px;width:410px;font-size:16px;line-height:20px;color:#333">某些页面包含未被识别的文本。您可以运行文本识别以<br>便使这些文本可搜索或可编辑。</div>
<div class="t" style="left:1457px;top:410px;font-size:16px;color:#A03CB4">识别文本</div>
<div class="a" style="left:1773px;top:409px;width:15px;height:15px;background:#fff;border:1px solid #8A8A8A;border-radius:2px"></div>
<div class="t" style="left:1795px;top:409px;font-size:16px;color:#777">不再显示</div>
<!-- trial button -->
<div class="a" style="left:1673px;top:107px;width:164px;height:53px;border-radius:5px;background:#6A34B4"></div>
<div class="a" style="left:1673px;top:107px;width:164px;height:49px;border-radius:5px 5px 3px 3px;background:linear-gradient(100deg,#7E9EF2 0%,#9B8DF4 50%,#C282F2 100%)"></div>
<div class="a" style="left:1685px;top:114px;font-size:16px;line-height:17px;color:#fff;white-space:nowrap">正在试用期<br><span style="-webkit-text-stroke:0.6px #fff">立即购买<span style="margin-left:3px">！</span></span></div>
<div class="a" style="left:1800px;top:116px;width:27px;height:32px;border-radius:4px;background:linear-gradient(180deg,#E6E6E8 0px,#EDEDEF 6px,#FFFFFF 8px)"></div>
<div class="t" style="left:1804px;top:125px;font-size:16px;color:#5A2E8E;-webkit-text-stroke:0.5px #5A2E8E">14</div>
<!-- dialog -->
<div class="a" style="left:620px;top:218px;width:608px;height:795px;border-radius:9px;background:#fff;border:1px solid #A4A6AA;box-shadow:0 0 46px 0 rgba(0,0,0,0.22),0 8px 12px rgba(0,0,0,0.18)"></div>
<div class="a" style="left:621px;top:219px;width:606px;height:31px;border-radius:8px 8px 0 0;background:#EEF2F7"></div>
<div class="t" style="left:625px;top:226px;font-size:15px;color:#111">交错合并文件到一个单独的PDF文件</div>
<svg class="a" style="left:1196px;top:224px" width="20" height="20" fill="none" stroke="#111" stroke-width="1.4"><path d="M4.2 4.2 L16 16 M16 4.2 L4.2 16"/></svg>
<!-- group 1 -->
<div class="a" style="left:645px;top:284px;width:558px;height:112px;border:1px solid #DCDCDC"></div>
<div class="a" style="left:650px;top:278px;width:54px;height:14px;background:#fff"></div>
<div class="t" style="left:654px;top:276px;font-size:16px;color:#222">文件<span style="margin-left:2px">:</span></div>
<div class="t" style="left:717px;top:319px;font-size:16px;color:#222">奇数页(<u>O</u>)<span style="margin-left:2px">:</span></div>
<div class="a" style="left:718px;top:349px;width:166px;height:28px;border-radius:3px;background:#FCFCFC;border:1px solid #2F7CD1"></div>
<div class="a" style="left:721px;top:352px;width:160px;height:22px;border:1px dotted #111"></div>
<div class="t" style="left:769px;top:356px;font-size:16px;color:#111">选择文件</div>
<svg class="a" style="left:0;top:0" width="1000" height="400"><path d="M912 356.8 H929.5 V349 L936.8 360.8 H912 Z M936.8 364 H912 L919.4 375.8 V367.8 H936.8 Z" fill="#C0C0C0"/></svg>
<div class="t" style="left:964px;top:319px;font-size:16px;color:#222">偶数页(<u>E</u>)<span style="margin-left:2px">:</span></div>
<div class="a" style="left:965px;top:349px;width:166px;height:28px;border-radius:3px;background:#FCFCFC;border:1px solid #D0D0D0"></div>
<div class="t" style="left:1016px;top:356px;font-size:16px;color:#111">选择文件</div>
<!-- group 2 -->
<div class="a" style="left:645px;top:414px;width:558px;height:536px;border:1px solid #DCDCDC"></div>
<div class="a" style="left:650px;top:405px;width:54px;height:18px;background:#fff"></div>
<div class="t" style="left:654px;top:406px;font-size:16px;color:#222">预览<span style="margin-left:2px">:</span></div>
<div class="t" style="left:900px;top:680px;font-size:16px;color:#111">无预览</div>
<!-- buttons -->
<div class="a" style="left:1010px;top:959px;width:93px;height:28px;border-radius:3px;background:#F5F5F5;border:1px solid #E6E6E6"></div>
<div class="t" style="left:1040px;top:965px;font-size:16px;color:#8A8A8A">确定</div>
<div class="a" style="left:1111px;top:959px;width:91px;height:28px;border-radius:3px;background:#FCFCFC;border:1px solid #CFCFCF"></div>
<div class="t" style="left:1140px;top:965px;font-size:16px;color:#111">取消</div>
</body></html>
